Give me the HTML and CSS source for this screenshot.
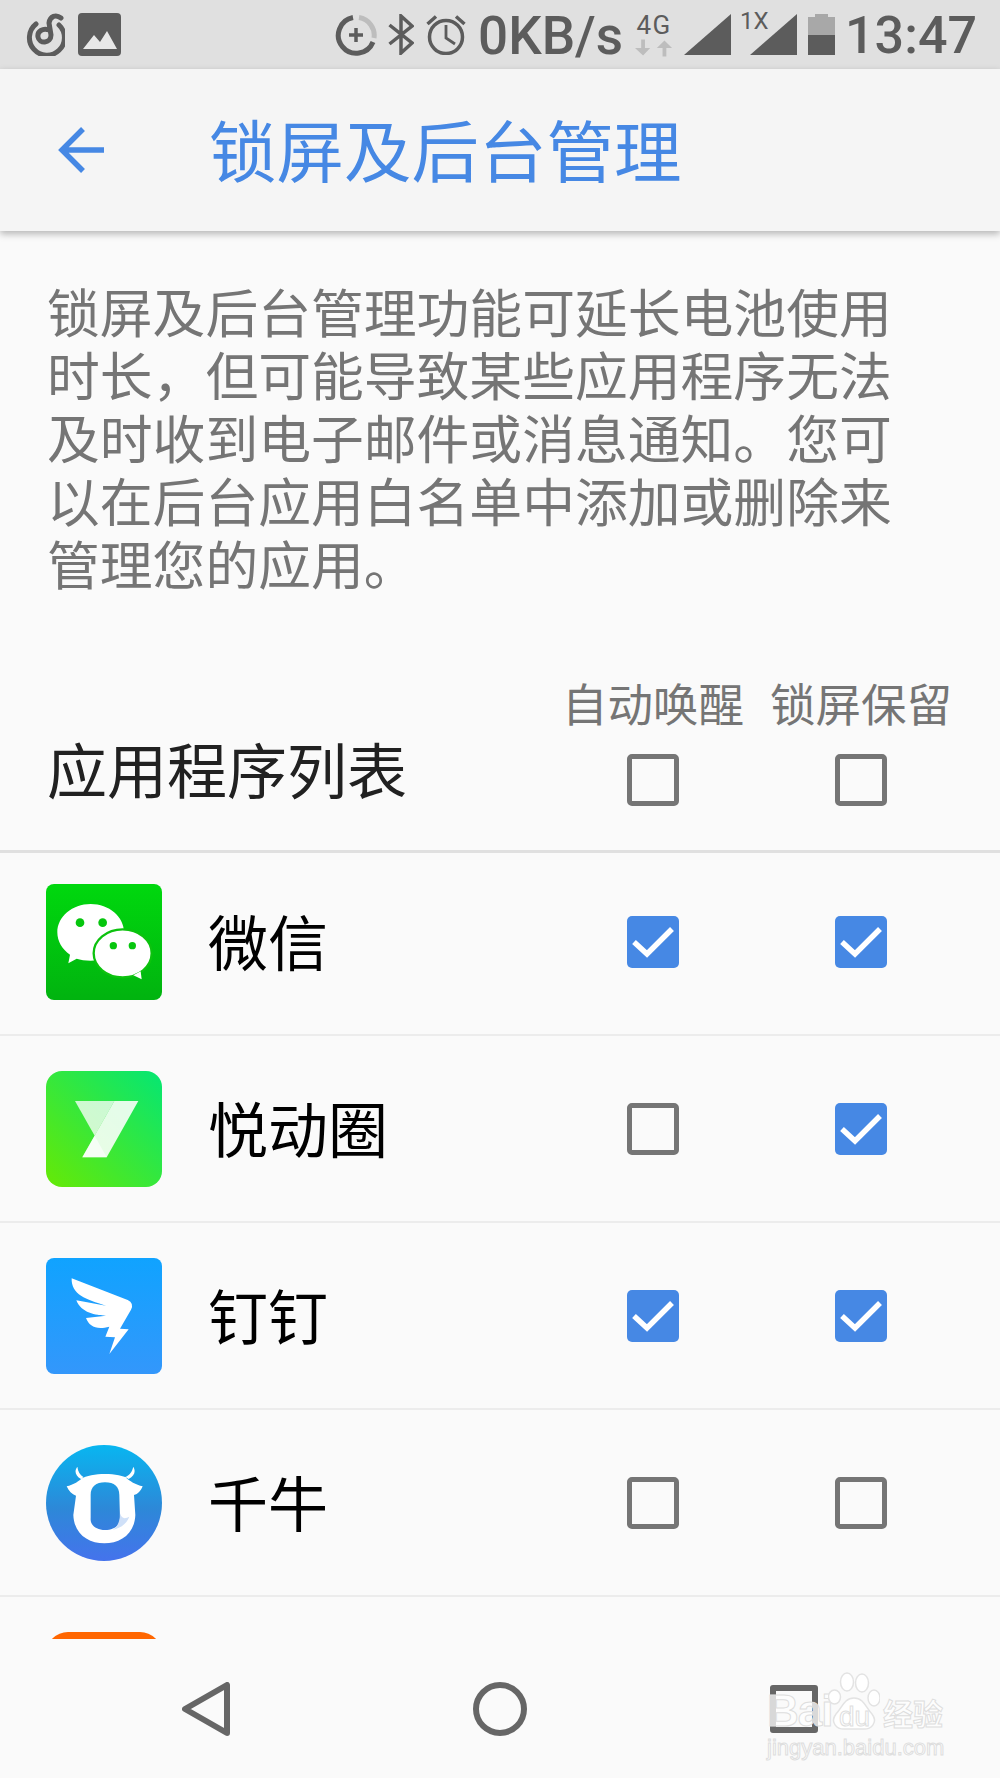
FILE: index.html
```html
<!DOCTYPE html>
<html lang="zh-CN">
<head>
<meta charset="utf-8">
<title>锁屏及后台管理</title>
<link rel="stylesheet" href="styles.css">
</head>
<body>
<div class="screen">
  <div class="status">
    <div class="status-left">
      <svg class="ic-net" viewBox="0 0 40 43" fill="none" stroke="#5c5c5c" stroke-width="5" stroke-linecap="round"><path d="M11 11 A17.500 17.500 0 1 0 34 12"/><path d="M36 5 C31 1 25 3 24 10 L26 22 C26 31 14 31 13 24 C12 18 18 15 24 17"/></svg>
      <svg class="ic-img" viewBox="0 0 43 43"><rect width="43" height="43" rx="4" fill="#5c5c5c"/><path d="M5 36 L16 22 L22 29 L29 18 L39 36Z" fill="#e8e8e8"/></svg>
    </div>
    <div class="status-right">
      <svg class="ic-saver" viewBox="0 0 42 42" fill="none"><path d="M24 3.500 A18 18 0 0 1 39 24" stroke="#bdbdbd" stroke-width="5"/><path d="M18 3.500 A18 18 0 1 0 38 28" stroke="#5c5c5c" stroke-width="5"/><path d="M21 14V28M14 21H28" stroke="#5c5c5c" stroke-width="3.500"/></svg>
      <svg class="ic-bt" viewBox="0 0 26 41" fill="none" stroke="#5c5c5c" stroke-width="3.500"><path d="M1.500 11 L24 29 L13 39 V2 L24 12 L1.500 30"/></svg>
      <svg class="ic-alarm" viewBox="0 0 40 41" fill="none" stroke="#5c5c5c" stroke-width="3.500"><circle cx="20" cy="23" r="16.500"/><path d="M20 11V24L29 30" stroke-width="2.800"/><path d="M1.500 10 L10 2.500M38.500 10 L30 2.500"/></svg>
      <span class="speed">0KB/s</span>
      <div class="net4g">
        <span class="net4g-label">4G</span>
        <svg class="net4g-arrows" viewBox="0 0 40 18" fill="#bdbdbd"><path d="M6.500 0H10.500V9H16L8.500 17 0 9H6.500Z"/><path d="M29 18H33V9H39L31 1 23 9H29Z"/></svg>
      </div>
      <svg class="ic-signal" viewBox="0 0 47 41"><path d="M47 0V41H0Z" fill="#5c5c5c"/></svg>
      <div class="signal-wrap">
        <span class="signal-1x">1X</span>
        <svg class="ic-signal" viewBox="0 0 47 41"><path d="M47 0V41H0Z" fill="#5c5c5c"/></svg>
      </div>
      <svg class="ic-battery" viewBox="0 0 27 41"><path d="M7 0H20V3H27V21H0V3H7Z" fill="#a8a8a8"/><rect y="21" width="27" height="20" fill="#5c5c5c"/></svg>
      <span class="clock">13:47</span>
    </div>
  </div>

  <div class="appbar">
    <svg class="ic-back" viewBox="0 0 48 46" fill="none" stroke="#4688e4" stroke-width="5.500"><path d="M46 23H5M25 2 L4 23 L25 44"/></svg>
    <h1 class="title">锁屏及后台管理</h1>
  </div>

  <div class="content">
    <p class="intro">锁屏及后台管理功能可延长电池使用时长，但可能导致某些应用程序无法及时收到电子邮件或消息通知。您可以在后台应用白名单中添加或删除来管理您的应用。</p>

    <div class="list-head">
      <div class="list-title">应用程序列表</div>
      <div class="head-cell"><span class="head-label">自动唤醒</span><span class="box"></span></div>
      <div class="head-cell"><span class="head-label">锁屏保留</span><span class="box"></span></div>
    </div>

    <div class="row row-first">
      <svg class="app-icon" viewBox="0 0 348 348">
        <defs><linearGradient id="gw" x1="0" y1="0" x2="0" y2="1"><stop offset="0" stop-color="#00d80e"/><stop offset="1" stop-color="#01b30f"/></linearGradient></defs>
        <rect width="348" height="348" rx="24" fill="url(#gw)"/>
        <path d="M67 238 L72 212 C48 196 34 172 34 145 C34 98 79 60 134 60 C189 60 234 98 234 145 C234 192 189 230 134 230 C118 230 103 227 92 224Z" fill="#fff"/>
        <circle cx="102" cy="116" r="13" fill="#06c60e"/><circle cx="170" cy="116" r="13" fill="#06c60e"/>
        <ellipse cx="230" cy="208" rx="87" ry="72" fill="#fff" stroke="#0cc20e" stroke-width="7"/>
        <path d="M287 286 L284 262 L262 274Z" fill="#fff"/>
        <circle cx="202" cy="185" r="11" fill="#06c60e"/><circle cx="259" cy="185" r="11" fill="#06c60e"/>
      </svg>
      <span class="app-name">微信</span>
      <div class="cell"><span class="box box-on"><svg class="check" viewBox="0 0 52 52"><path d="M7 26 L20 38 L45 13" fill="none" stroke="#fff" stroke-width="5.500"/></svg></span></div>
      <div class="cell"><span class="box box-on"><svg class="check" viewBox="0 0 52 52"><path d="M7 26 L20 38 L45 13" fill="none" stroke="#fff" stroke-width="5.500"/></svg></span></div>
    </div>

    <div class="row">
      <svg class="app-icon" viewBox="0 0 348 348">
        <defs><linearGradient id="gy" x1="0" y1="1" x2="1" y2="0"><stop offset="0" stop-color="#66e905"/><stop offset="1" stop-color="#05e673"/></linearGradient></defs>
        <rect width="348" height="348" rx="48" fill="url(#gy)"/>
        <path d="M87 90 H205 L146 194Z" fill="#fff" fill-opacity=".76"/>
        <path d="M205 90 H277 L182 259 H109Z" fill="#fff" fill-opacity=".88"/>
        <path d="M146 194 L182 259 H109Z" fill="#fff" fill-opacity=".6"/>
      </svg>
      <span class="app-name">悦动圈</span>
      <div class="cell"><span class="box"></span></div>
      <div class="cell"><span class="box box-on"><svg class="check" viewBox="0 0 52 52"><path d="M7 26 L20 38 L45 13" fill="none" stroke="#fff" stroke-width="5.500"/></svg></span></div>
    </div>

    <div class="row">
      <svg class="app-icon" viewBox="0 0 348 348">
        <defs><linearGradient id="gd" x1="0" y1="0" x2="0" y2="1"><stop offset="0" stop-color="#10a3ff"/><stop offset="1" stop-color="#3397fb"/></linearGradient></defs>
        <rect width="348" height="348" rx="24" fill="url(#gd)"/>
        <path d="M77 61 L245 126 Q265 136 255 155 L222 212 L248 214 L190 288 L207 238 L178 236 L190 206 C150 216 130 205 120 180 L180 173 C150 172 105 165 91 127 L180 143 C120 125 75 110 77 61Z" fill="#fff"/>
      </svg>
      <span class="app-name">钉钉</span>
      <div class="cell"><span class="box box-on"><svg class="check" viewBox="0 0 52 52"><path d="M7 26 L20 38 L45 13" fill="none" stroke="#fff" stroke-width="5.500"/></svg></span></div>
      <div class="cell"><span class="box box-on"><svg class="check" viewBox="0 0 52 52"><path d="M7 26 L20 38 L45 13" fill="none" stroke="#fff" stroke-width="5.500"/></svg></span></div>
    </div>

    <div class="row">
      <svg class="app-icon" viewBox="0 0 348 348">
        <defs><linearGradient id="gq" x1="0" y1="0" x2="0" y2="1"><stop offset="0" stop-color="#08b6f0"/><stop offset=".55" stop-color="#2d88d8"/><stop offset="1" stop-color="#4573ec"/></linearGradient></defs>
        <circle cx="174" cy="174" r="174" fill="url(#gq)"/>
        <path fill-rule="evenodd" fill="#fff" d="M94 65 C84 78 88 92 105 102 C135 82 220 82 248 102 C266 92 270 78 262 65 C258 80 252 90 238 96 C250 108 270 120 290 124 C284 138 276 148 264 150 L268 210 C266 268 222 295 175 295 C128 295 84 268 82 210 L90 152 C78 148 68 138 62 124 C82 120 100 108 112 96 C102 90 96 80 94 65Z M134 150 C134 125 150 112 177 112 C205 112 220 125 220 150 L222 220 C222 245 200 255 177 255 C150 255 132 240 134 220Z"/>
        <path d="M222 205 C228 225 240 220 250 215 C240 240 220 250 200 255 C215 245 222 230 222 205Z" fill="#cfe0f8"/>
      </svg>
      <span class="app-name">千牛</span>
      <div class="cell"><span class="box"></span></div>
      <div class="cell"><span class="box"></span></div>
    </div>

    <div class="row"><div class="app-icon app-icon-orange"></div></div>
  </div>

  <div class="nav">
    <svg class="nav-back" viewBox="0 0 48 54" fill="none" stroke="#666" stroke-width="6" stroke-linejoin="round"><path d="M45 3 V51 L3 27Z"/></svg>
    <span class="nav-home"></span>
    <span class="nav-recent"></span>
  </div>

  <div class="watermark">
    <div class="wm-top">
      <span class="wm-bai">Bai</span>
      <div class="wm-paw">
        <svg class="wm-paw-svg" viewBox="0 0 52 60" fill="#fff" stroke="#e3e3e3" stroke-width="1.500"><ellipse cx="6.500" cy="25" rx="6" ry="7"/><ellipse cx="19" cy="10" rx="6.500" ry="9"/><ellipse cx="34" cy="11" rx="6.500" ry="9"/><ellipse cx="46" cy="26" rx="6" ry="8"/><path d="M26 26 C36 26 38 36 44 42 C50 50 44 58 34 57 H18 C8 58 2 50 8 42 C14 36 16 26 26 26Z"/></svg>
        <span class="wm-du">du</span>
      </div>
      <span class="wm-jy">经验</span>
    </div>
    <div class="wm-url">jingyan.baidu.com</div>
  </div>
</div>
</body>
</html>
```
FILE: styles.css
```css
* { box-sizing: border-box; }
html, body { margin: 0; padding: 0; }
body { background: #fafafa; font-family: "Noto Sans CJK SC", "Noto Sans", sans-serif; }

.screen {
  position: relative;
  width: 1000px;
  height: 1778px;
  display: flex;
  flex-direction: column;
  overflow: hidden;
  background: #fafafa;
}

/* status bar */
.status {
  height: 69px;
  flex: none;
  background: #e0e0e0;
  display: flex;
  justify-content: space-between;
  align-items: center;
  padding: 0 23px 0 25px;
  color: #5c5c5c;
  font-family: Roboto, "Liberation Sans", sans-serif;
}
.status-left, .status-right { display: flex; align-items: center; }
.status-left { gap: 13px; }
.ic-net { width: 40px; height: 43px; }
.ic-img { width: 43px; height: 43px; }
.ic-saver { width: 42px; height: 42px; margin-right: 11px; }
.ic-bt { width: 26px; height: 41px; margin-right: 12px; }
.ic-alarm { width: 40px; height: 41px; margin-right: 12px; }
.speed { font-size: 53px; font-weight: 500; line-height: 60px; margin-right: 12px; margin-top: 2px; }
.net4g { width: 38px; display: flex; flex-direction: column; align-items: center; margin-right: 11px; }
.net4g-label { font-size: 26px; line-height: 24px; letter-spacing: 1.500px; }
.net4g-arrows { width: 38px; height: 18px; margin-top: 2px; }
.ic-signal { width: 47px; height: 41px; display: block; }
.signal-wrap { position: relative; margin-left: 19px; margin-right: 11px; }
.signal-1x { position: absolute; left: -10px; top: -5px; font-size: 24px; line-height: 24px; }
.ic-battery { width: 27px; height: 41px; margin-right: 10px; }
.clock { font-size: 52px; font-weight: 500; line-height: 60px; margin-top: 2px; }

/* app bar */
.appbar {
  position: relative;
  z-index: 1;
  height: 162px;
  flex: none;
  background: #f5f5f5;
  display: flex;
  align-items: center;
  padding-left: 58px;
  box-shadow: 0 3px 7px rgba(0, 0, 0, .28);
}
.ic-back { width: 48px; height: 46px; margin-right: 103px; margin-top: -1px; }
.title { margin: -4px 0 0; font-size: 67.500px; font-weight: 400; line-height: 80px; color: #4688e4; }

/* content */
.content { flex: 1; min-height: 0; overflow: hidden; padding-top: 48px; }
.intro {
  margin: 0;
  padding: 0 0 0 47px;
  width: 900px;
  font-size: 52.800px;
  line-height: 63px;
  color: #757575;
}
.list-head {
  display: flex;
  align-items: flex-end;
  padding: 81px 35px 44px 47px;
  height: 259px;
  border-bottom: 3px solid #e0e0e0;
}
.list-title { flex: 1; font-size: 60px; line-height: 60px; color: #212121; margin-bottom: 8px; }
.head-cell { width: 208px; display: flex; flex-direction: column; align-items: center; gap: 26px; }
.head-label { font-size: 45.500px; line-height: 52px; color: #757575; white-space: nowrap; }

.row {
  display: flex;
  align-items: center;
  height: 187px;
  padding-left: 46px;
  padding-right: 35px;
  border-bottom: 2px solid #ececec;
}
.row-first { height: 183px; padding-bottom: 4px; }
.app-icon { width: 116px; height: 116px; flex: none; display: block; }
.app-icon-orange { background: #ff6600; border-radius: 22px; }
.app-name { flex: 1; margin-left: 46px; padding-bottom: 4px; font-size: 60px; line-height: 70px; color: #000; }
.cell { width: 208px; display: flex; justify-content: center; }

.box {
  width: 52px;
  height: 52px;
  display: block;
  border: 5px solid #757575;
  border-radius: 5px;
}
.box-on { border: none; background: #4688e4; }
.check { width: 52px; height: 52px; display: block; }

/* navigation bar */
.nav {
  position: relative;
  height: 139px;
  flex: none;
  background: #fafafa;
  display: flex;
  align-items: center;
  justify-content: center;
  gap: 243px;
}
.nav-back { width: 48px; height: 54px; }
.nav-home { width: 54px; height: 54px; border: 6px solid #666; border-radius: 50%; }
.nav-recent { width: 48px; height: 48px; border: 6px solid #666; border-radius: 3px; }

/* watermark */
.watermark {
  position: absolute;
  left: 767px;
  top: 1672px;
  width: 180px;
  font-family: "Liberation Sans", sans-serif;
  color: rgba(255, 255, 255, .75);
  -webkit-text-stroke: 1px #dedede;
}
.wm-top { display: flex; align-items: flex-end; height: 58px; }
.wm-bai { font-size: 44px; line-height: 38px; font-weight: 700; letter-spacing: -1px; width: 61px; white-space: nowrap; }
.wm-paw { position: relative; width: 52px; height: 60px; margin-bottom: -2px; }
.wm-paw-svg { width: 52px; height: 60px; display: block; }
.wm-du { position: absolute; left: 11px; top: 32px; font-size: 28px; line-height: 26px; }
.wm-jy { margin-left: 3px; font-family: "Noto Sans CJK SC", sans-serif; font-size: 30px; line-height: 36px; font-weight: 700; }
.wm-url { margin-top: 5px; font-size: 22px; line-height: 26px; white-space: nowrap; }
```
